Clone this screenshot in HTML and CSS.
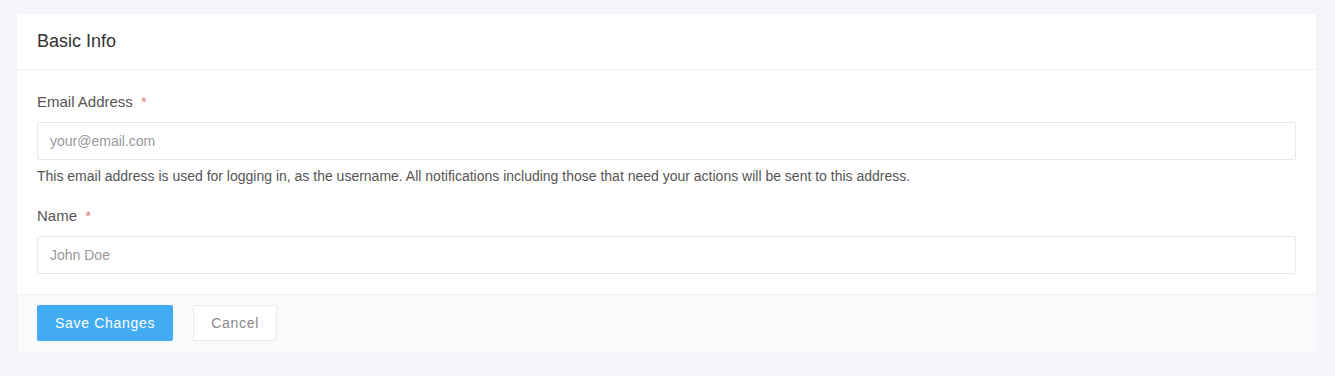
FILE: index.html
```html
<!DOCTYPE html>
<html lang="en">
<head>
    <meta charset="UTF-8">
    <meta name="viewport" content="width=device-width, initial-scale=1.0">
    <title>Basic Info</title>

    <link rel="stylesheet" href="styles.css">
</head>
<body>
    <div class="card">
        <div class="card-header">Basic Info</div>

        <div class="card-body">
            <div class="field">
                <label for="email">Email Address <span class="req">*</span></label>
                <input id="email" type="text" placeholder="your@email.com">
                <p class="help">This email address is used for logging in, as the username. All notifications including those that need your actions will be sent to this address.</p>
            </div>

            <div class="field">
                <label for="name">Name <span class="req">*</span></label>
                <input id="name" type="text" placeholder="John Doe">
            </div>
        </div>

        <div class="card-footer">
            <button class="btn btn-primary">Save Changes</button>
            <button class="btn btn-default">Cancel</button>
        </div>
    </div>
</body>
</html>
```

FILE: styles.css
```css
body {
    font-family: "Liberation Sans", Arial, sans-serif;
    margin: 0;
    padding: 14px 19px 0 17px;
    background-color: #f4f5f8;
    color: #444;
}

.card {
    background-color: #fff;
    box-shadow: 0 1px 2px rgba(0, 0, 0, 0.04);
}

.card-header {
    height: 55px;
    line-height: 54px;
    padding: 0 20px;
    font-size: 18px;
    color: #333;
    border-bottom: 1px solid #eef0f3;
}

.card-body {
    padding: 23px 20px 20px;
}

.field {
    margin-bottom: 22px;
}

.field:last-child {
    margin-bottom: 0;
}

.field label {
    display: block;
    font-size: 15px;
    color: #555;
    line-height: 18px;
    margin-bottom: 11px;
}

.req {
    color: #e5787c;
    margin-left: 4px;
}

.field input {
    display: block;
    box-sizing: border-box;
    width: 100%;
    height: 38px;
    padding: 0 12px;
    border: 1px solid #e5e7eb;
    border-radius: 2px;
    font-family: inherit;
    font-size: 14px;
    color: #444;
    outline: none;
}

.field input::placeholder {
    color: #999;
}

.help {
    margin: 8px 0 0;
    font-size: 14px;
    line-height: 17px;
    color: #555;
}

.card-footer {
    background-color: #f9fafc;
    border-top: 1px solid #eef0f3;
    padding: 10px 20px;
    display: flex;
    gap: 20px;
}

.btn {
    height: 36px;
    padding: 0 17px;
    font-family: inherit;
    font-size: 14px;
    letter-spacing: 0.7px;
    border-radius: 2px;
    cursor: pointer;
}

.btn-primary {
    background-color: #42acf3;
    border: 1px solid #42acf3;
    color: #fff;
}

.btn-default {
    background-color: #fff;
    border: 1px solid #e8eaed;
    color: #888;
}
```
